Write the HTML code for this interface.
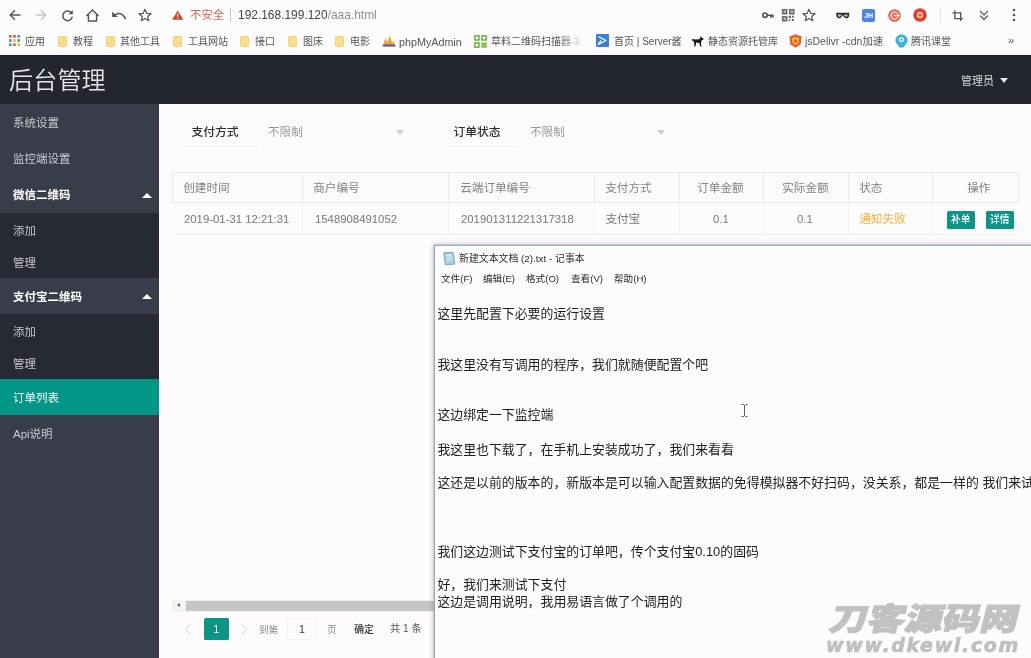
<!DOCTYPE html>
<html lang="zh-CN">
<head>
<meta charset="utf-8">
<title>后台管理</title>
<style>
*{box-sizing:border-box;margin:0;padding:0}
html,body{width:1031px;height:658px;overflow:hidden;background:#fdfbfb}
body{position:relative;font-family:"Liberation Sans","Noto Sans CJK SC",sans-serif;font-size:11.2px;color:#666;-webkit-font-smoothing:antialiased}
#all{position:absolute;left:0;top:0;width:1031px;height:658px;will-change:transform;transform:translateZ(0)}
.abs{position:absolute;white-space:nowrap}
/* ---------- browser chrome ---------- */
#chrome{position:absolute;left:0;top:0;width:1031px;height:55px;background:#fdfcfc}
#chrome .t{position:absolute;white-space:nowrap;font-size:10px;line-height:14px;color:#555;top:34.7px}
#chrome svg{position:absolute;overflow:visible}
.fold{position:absolute;top:35.5px;width:9px;height:11.5px;background:#f8de8a;border-radius:1.5px;border:1px solid #f4d470}
/* ---------- header ---------- */
#hdr{position:absolute;left:0;top:55px;width:1031px;height:49px;background:#23262e;box-shadow:inset 0 1px 0 #1b1c22}
#logo{position:absolute;left:9px;top:10.5px;font-size:24px;line-height:30px;color:#e6e6e8;font-weight:350;letter-spacing:0.2px;white-space:nowrap}
#adm{position:absolute;left:961px;top:18px;font-size:11px;line-height:16px;color:#d8d9db;white-space:nowrap}
#adm i{position:absolute;left:38.5px;top:4.5px;width:0;height:0;border-left:4.75px solid transparent;border-right:4.75px solid transparent;border-top:5.5px solid #e4e4e6}
/* ---------- sidebar ---------- */
#side{position:absolute;left:0;top:104px;width:159px;height:554px;background:#393d49}
#side .it{position:absolute;left:0;width:159px;height:36px;line-height:39px;padding-left:13px;font-size:11.5px;color:#c9cacf;white-space:nowrap}
#side .it.b{color:#fff;font-weight:700}
#side .sub{position:absolute;left:0;width:159px;background:#272a33}
#side .sub div{height:32px;line-height:36px;padding-left:13px;font-size:11.5px;color:#c3c4c9;white-space:nowrap}
#side .on{background:#029688;color:#fff}
#side .up{position:absolute;right:7.5px;top:16.5px;width:0;height:0;border-left:5px solid transparent;border-right:5px solid transparent;border-bottom:5.5px solid #fff}

/* ---------- main ---------- */
#main{position:absolute;left:159px;top:104px;width:872px;height:554px;background:#fdfbfb}
.lbl{position:absolute;top:11px;height:32px;line-height:34px;font-size:11.8px;font-weight:500;color:#2e2e2e;text-align:center;white-space:nowrap}
.lbl:after{content:"";position:absolute;left:12px;right:1px;bottom:0;height:1px;background:#f4f2f2}
.sel{position:absolute;top:11px;height:32px;line-height:34px;font-size:11.6px;color:#979797;white-space:nowrap}
.dn{position:absolute;top:25.5px;width:0;height:0;border-left:4.5px solid transparent;border-right:4.5px solid transparent;border-top:5px solid #cdcdcd}
#tb{position:absolute;left:13px;top:68px;width:847px;height:63px}
#tb .hd{position:absolute;left:0;top:0;width:847px;height:31px;background:#fcfafa;border:1px solid #eae8e8}
#tb .rw{position:absolute;left:0;top:31px;width:847px;height:32px;border-bottom:1px solid #efeded}
#tb .vl{position:absolute;top:0;width:1px;height:63px;background:linear-gradient(#e9e7e7 0,#e9e7e7 31px,#f3f1f1 31px,#f3f1f1 63px)}
#tb .c{position:absolute;white-space:nowrap;font-size:11.35px;line-height:16px;color:#777}
#tb .h{top:7.5px;color:#828282;font-size:11.6px;margin-left:-.8px}
#tb .d{top:38.7px}
.btn{position:absolute;top:39px;height:18px;width:27.5px;background:#0a9587;color:#fff;font-weight:500;font-size:9.7px;line-height:18px;text-align:center;border-radius:1.5px;white-space:nowrap}
#sb{position:absolute;left:13px;top:496px;width:262px;height:12px;background:#f3f2f2}
#sb b{position:absolute;left:14px;top:0.5px;width:248px;height:10.5px;background:#c6c5c5}
#sb i{position:absolute;left:5px;top:3px;width:0;height:0;border-top:2.5px solid transparent;border-bottom:2.5px solid transparent;border-right:3.5px solid #666}
#pg{position:absolute;left:13px;top:513px;height:26px;width:270px;font-size:9.6px;color:#8a8a8a}
#pg .abs{line-height:14px;top:6px}
#pg .cur{position:absolute;left:31.5px;top:1px;width:25.5px;height:21.5px;background:#0a9587;color:#fff;text-align:center;line-height:22px;font-size:11px;border-radius:1.5px}
#pg .box{position:absolute;top:1px;height:22px;border:1px solid #f3f1f1;border-radius:1.5px;text-align:center;line-height:21px;color:#3d3d3d;font-size:10.5px}

/* ---------- notepad ---------- */
#np{position:absolute;left:434px;top:245px;width:620px;height:430px;background:#fdfcfc;border:1px solid #8fabc6;box-shadow:0 0 0 .4px rgba(143,166,187,.7),0 0 5px 1px rgba(60,60,60,.26)}
#np .ti{position:absolute;left:24px;top:5.7px;font-size:9.9px;line-height:14px;color:#2b2b2b;white-space:nowrap}
#np .mn{position:absolute;top:25.6px;font-size:9.6px;line-height:14px;color:#2b2b2b;white-space:nowrap}
#np .ln{position:absolute;left:2.4px;font-size:12.9px;line-height:17px;color:#1d1d1d;white-space:nowrap}
#np svg{position:absolute;overflow:visible}
#wm1{-webkit-text-stroke:1.1px #c2c1c1;position:absolute;left:824.5px;top:597.5px;font-size:31px;line-height:44px;font-weight:900;color:#c2c1c1;white-space:nowrap;letter-spacing:0;transform-origin:0 100%;transform:skewX(-14deg) scaleX(1.215)}
#wm2{-webkit-text-stroke:0.7px #c0bfbf;position:absolute;left:826px;top:633px;font-size:19px;line-height:24px;font-weight:700;font-style:italic;color:#c0bfbf;white-space:nowrap;letter-spacing:1.65px;font-family:"DejaVu Sans","Liberation Sans",sans-serif}
</style>
</head>
<body>
<div id="all">

<!-- ================= BROWSER CHROME ================= -->
<div id="chrome">
  <!-- toolbar icons -->
  <svg style="left:9px;top:9.3px" width="12" height="12" viewBox="0 0 12 12"><path d="M11.5 6 H1.5 M6 1.2 L1.2 6 L6 10.8" fill="none" stroke="#555" stroke-width="1.4"/></svg>
  <svg style="left:35px;top:9.3px" width="12" height="12" viewBox="0 0 12 12"><path d="M0.5 6 H10.5 M6 1.2 L10.8 6 L6 10.8" fill="none" stroke="#c4c4c4" stroke-width="1.4"/></svg>
  <svg style="left:60.5px;top:8.5px" width="13" height="13" viewBox="0 0 13 13"><path d="M10.6 4.2 A4.8 4.8 0 1 0 11.3 7.6" fill="none" stroke="#555" stroke-width="1.5"/><path d="M11.8 1 V5.2 H7.6 Z" fill="#555"/></svg>
  <svg style="left:86px;top:8.5px" width="13" height="13" viewBox="0 0 13 13"><path d="M0.4 6.9 L6.5 1 L12.6 6.9 M2.4 5.4 V12 H10.6 V5.4" fill="none" stroke="#555" stroke-width="1.4"/></svg>
  <svg style="left:111.5px;top:11px" width="14" height="9" viewBox="0 0 14 9"><path d="M0.2 0.6 V6 H5.8 Z" fill="#555"/><path d="M2.6 4.2 C5.4 1.4 11 1.6 13.6 8.2" fill="none" stroke="#555" stroke-width="1.6"/></svg>
  <svg style="left:137.7px;top:7.6px" width="14" height="14" viewBox="0 0 14 14"><path d="M7 1.3 L8.7 5.3 L13 5.7 L9.7 8.5 L10.7 12.7 L7 10.5 L3.3 12.7 L4.3 8.5 L1 5.7 L5.3 5.3 Z" fill="none" stroke="#555" stroke-width="1.2" stroke-linejoin="round"/></svg>
  <svg style="left:171.5px;top:10px" width="11.5" height="10" viewBox="0 0 13 11"><path d="M6.5 0.3 L12.8 10.8 H0.2 Z" fill="#cf3f2a"/><path d="M6.5 3.8 V7.2 M6.5 8.2 V9.6" stroke="#fff" stroke-width="1.3"/></svg>
  <span class="t" style="left:190px;top:7px;font-size:11.4px;line-height:16px;color:#d9654d">不安全</span>
  <i style="position:absolute;left:230px;top:8px;width:1px;height:14px;background:#c4c4c4"></i>
  <span class="t" style="left:238px;top:7px;font-size:11.95px;line-height:16px;color:#444">192.168.199.120<span style="color:#8f8f8f">/aaa.html</span></span>

  <!-- right toolbar icons -->
  <svg style="left:762px;top:12px" width="12" height="7" viewBox="0 0 12 7"><circle cx="3" cy="3.2" r="2.2" fill="none" stroke="#555" stroke-width="1.7"/><path d="M5 3.2 H11.5 M9 3.2 V6 M11 3.2 V5.4" stroke="#555" stroke-width="1.6" fill="none"/></svg>
  <svg style="left:782px;top:9px" width="12.5" height="12.5" viewBox="0 0 13 13"><g fill="#bbb" stroke="#666" stroke-width="1.5"><rect x=".7" y=".7" width="4.2" height="4.2"/><rect x="8.1" y=".7" width="4.2" height="4.2"/><rect x=".7" y="8.1" width="4.2" height="4.2"/></g><path d="M7 7 h2.4 v2.4 H7z M10.4 10.4 h2 v2 h-2z M10.4 7 h2 v1.8 h-2z M7 10.6 h1.8 v1.8 H7z" fill="#666"/></svg>
  <svg style="left:802px;top:8px" width="14" height="14" viewBox="0 0 14 14"><path d="M7 1.3 L8.7 5.3 L13 5.7 L9.7 8.5 L10.7 12.7 L7 10.5 L3.3 12.7 L4.3 8.5 L1 5.7 L5.3 5.3 Z" fill="none" stroke="#555" stroke-width="1.2" stroke-linejoin="round"/></svg>
  <svg style="left:835.5px;top:12px" width="13.5" height="7" viewBox="0 0 16 8"><path d="M0.3 0.6 H15.7 V3 C15.7 6 14 7.4 12 7.4 C10 7.4 9 5.6 8 3.2 C7 5.6 6 7.4 4 7.4 C2 7.4 0.3 6 0.3 3 Z" fill="#2a2a2a"/><ellipse cx="4.2" cy="4" rx="2" ry="1.6" fill="#bdbdbd"/><ellipse cx="11.8" cy="4" rx="2" ry="1.6" fill="#bdbdbd"/></svg>
  <div style="position:absolute;left:862px;top:9px;width:13px;height:13px;background:#4a86e4;border-radius:2px;color:#fff;font-size:7px;line-height:13px;text-align:center;font-weight:700;letter-spacing:-.3px">JH</div>
  <svg style="left:888px;top:9px" width="13" height="13" viewBox="0 0 13 13"><circle cx="6.5" cy="6.5" r="6.3" fill="#e1604f"/><circle cx="6.5" cy="6.5" r="3.6" fill="none" stroke="#fbe3df" stroke-width="1.3"/><path d="M6.5 6.5 H12" stroke="#fbe3df" stroke-width="1.4"/><circle cx="6.5" cy="6.5" r="1.1" fill="#fbe3df"/></svg>
  <svg style="left:913px;top:8px" width="14" height="14" viewBox="0 0 14 14"><circle cx="7" cy="7" r="6.8" fill="#d9402f"/><circle cx="7" cy="7" r="3.2" fill="#f6c7b2"/><circle cx="7" cy="7" r="1.7" fill="#e8553c"/></svg>
  <i style="position:absolute;left:939.5px;top:8px;width:1px;height:15px;background:#e2e2e2"></i>
  <svg style="left:952px;top:9.5px" width="11.5" height="11.5" viewBox="0 0 13 13"><path d="M3.2 0.5 V9.8 H12.5 M0.5 3.2 H9.8 V12.5" fill="none" stroke="#555" stroke-width="1.5"/></svg>
  <svg style="left:979px;top:10px" width="10" height="11" viewBox="0 0 10 11"><path d="M1 1 L5 5 L9 1 M1 5.6 L5 9.6 L9 5.6" fill="none" stroke="#666" stroke-width="1.4"/></svg>
  <svg style="left:1012px;top:8px" width="4" height="14" viewBox="0 0 4 14"><circle cx="2" cy="2" r="1.3" fill="#555"/><circle cx="2" cy="7" r="1.3" fill="#555"/><circle cx="2" cy="12" r="1.3" fill="#555"/></svg>

  <!-- bookmarks bar -->
  <svg style="left:9px;top:35px" width="11" height="11" viewBox="0 0 11 11"><g><rect x="0" y="0" width="2.6" height="2.6" fill="#e0533f"/><rect x="4.2" y="0" width="2.6" height="2.6" fill="#e0533f"/><rect x="8.4" y="0" width="2.6" height="2.6" fill="#4a86e4"/><rect x="0" y="4.2" width="2.6" height="2.6" fill="#4a86e4"/><rect x="4.2" y="4.2" width="2.6" height="2.6" fill="#f0b52d"/><rect x="8.4" y="4.2" width="2.6" height="2.6" fill="#3fa45b"/><rect x="0" y="8.4" width="2.6" height="2.6" fill="#3fa45b"/><rect x="4.2" y="8.4" width="2.6" height="2.6" fill="#e0533f"/><rect x="8.4" y="8.4" width="2.6" height="2.6" fill="#f0b52d"/></g></svg>
<span class="t" style="left:25px;">应用</span><i class="fold" style="left:58px"></i><span class="t" style="left:73px;">教程</span><i class="fold" style="left:106px"></i><span class="t" style="left:120px;">其他工具</span><i class="fold" style="left:173px"></i><span class="t" style="left:188px;">工具网站</span><i class="fold" style="left:240px"></i><span class="t" style="left:255px;">接口</span><i class="fold" style="left:288px"></i><span class="t" style="left:303px;">图床</span><i class="fold" style="left:335px"></i><span class="t" style="left:350px;">电影</span>
  <svg style="left:382px;top:35px" width="14" height="12" viewBox="0 0 14 12"><path d="M0.5 11.5 L3.6 3 L5.4 8 L7.6 0.8 L10.4 8.4 L11.4 5.4 L13.6 11.5 Z" fill="#efa32b"/><path d="M0.5 11.5 H13.6 L13 9.4 H1.3 Z" fill="#5b5f9b"/></svg>
<span class="t" style="left:399px;font-size:10.75px">phpMyAdmin</span>
  <svg style="left:474px;top:35px" width="13" height="13" viewBox="0 0 13 13"><g fill="none" stroke="#6cb33f" stroke-width="1.5"><rect x=".8" y=".8" width="4.2" height="4.2"/><rect x="8" y=".8" width="4.2" height="4.2"/><rect x=".8" y="8" width="4.2" height="4.2"/></g><rect x="7.4" y="7.4" width="5.4" height="5.4" fill="#8cc152"/></svg>
  <span class="t" style="left:491px;width:92px;overflow:hidden;-webkit-mask-image:linear-gradient(90deg,#000 72%,transparent 100%);mask-image:linear-gradient(90deg,#000 72%,transparent 100%)">草料二维码扫描器-彩色二维码</span>
  <svg style="left:596px;top:34px" width="13" height="13" viewBox="0 0 13 13"><rect width="13" height="13" rx="1" fill="#3d7fd6"/><path d="M2.6 2.6 L9.6 6.5 L2.6 10.4 M5.2 6.5 L1.8 10.6" fill="none" stroke="#fff" stroke-width="1.2"/></svg>
<span class="t" style="left:614px;">首页 | Server酱</span>
  <svg style="left:691px;top:35px" width="13" height="12" viewBox="0 0 13 12"><path d="M0.6 5 C1.6 3.4 2.6 4 3.6 4.4 L8.6 4.2 L9.8 1 L10.8 2.8 L12.6 3.6 L12 5 L10.6 5.2 L10 8 L10.4 11.6 H9.2 L8.4 8 L5.2 7.6 L4.4 11.6 H3.2 L3.2 7 C2.4 6.4 1.6 5.4 0.6 5 Z" fill="#161616"/></svg>
<span class="t" style="left:708px;">静态资源托管库</span>
  <svg style="left:789px;top:34px" width="13" height="14" viewBox="0 0 13 14"><path d="M6.5 0.3 L12.6 2.4 L11.6 10.6 L6.5 13.8 L1.4 10.6 L0.4 2.4 Z" fill="#e3622c"/><path d="M6.5 3 L10 4.2 L9.4 9.2 L6.5 11 L3.6 9.2 L3 4.2 Z" fill="#f7b64d"/><circle cx="6.5" cy="7" r="1.7" fill="#e3622c"/></svg>
<span class="t" style="left:805px;font-size:10.45px">jsDelivr -cdn加速</span>
  <svg style="left:895px;top:34px" width="13" height="14" viewBox="0 0 13 14"><path d="M6.5 0.4 C10 0.4 12.6 3 12.6 6 C12.6 9.4 9.6 11 8.6 13.6 H4.4 C3.4 11 0.4 9.4 0.4 6 C0.4 3 3 0.4 6.5 0.4 Z" fill="#39b5d8"/><circle cx="6.5" cy="5.6" r="2.6" fill="#d8f2fa"/><circle cx="6.5" cy="5.6" r="1.1" fill="#2a9fc4"/></svg>
<span class="t" style="left:911px;">腾讯课堂</span>
  <span class="t" style="left:1008px;top:33px;font-size:11px;color:#555">»</span>
</div>

<!-- ================= HEADER ================= -->
<div id="hdr">
  <div id="logo">后台管理</div>
  <div id="adm">管理员<i></i></div>
</div>

<!-- ================= SIDEBAR ================= -->
<div id="side">
  <div class="it" style="top:0">系统设置</div>
  <div class="it" style="top:36px">监控端设置</div>
  <div class="it b" style="top:72px">微信二维码<span class="up"></span></div>
  <div class="sub" style="top:108.5px;height:65px"><div>添加</div><div>管理</div></div>
  <div class="it b" style="top:173.5px">支付宝二维码<span class="up"></span></div>
  <div class="sub" style="top:209.5px;height:65.5px"><div>添加</div><div>管理</div></div>
  <div class="it on" style="top:275px">订单列表</div>
  <div class="it" style="top:311px">Api说明</div>
</div>

<!-- ================= MAIN ================= -->
<div id="main">
  <div class="lbl" style="left:13px;width:86px">支付方式</div>
  <div class="sel" style="left:109px">不限制</div><i class="dn" style="left:237px"></i>
  <div class="lbl" style="left:275px;width:86px">订单状态</div>
  <div class="sel" style="left:371px">不限制</div><i class="dn" style="left:498px"></i>

  <div id="tb">
    <div class="hd"></div>
    <div class="rw"></div>
    <i class="vl" style="left:130px"></i><i class="vl" style="left:276px"></i><i class="vl" style="left:422px"></i>
    <i class="vl" style="left:507px"></i><i class="vl" style="left:591px"></i><i class="vl" style="left:676px"></i><i class="vl" style="left:760px"></i>
    <div class="c h" style="left:12px">创建时间</div>
    <div class="c h" style="left:142px">商户编号</div>
    <div class="c h" style="left:289px">云端订单编号</div>
    <div class="c h" style="left:434px">支付方式</div>
    <div class="c h" style="left:526px">订单金额</div>
    <div class="c h" style="left:611px">实际金额</div>
    <div class="c h" style="left:688px">状态</div>
    <div class="c h" style="left:796px">操作</div>

    <div class="c d" style="left:12px">2019-01-31 12:21:31</div>
    <div class="c d" style="left:143px">1548908491052</div>
    <div class="c d" style="left:289px">201901311221317318</div>
    <div class="c d" style="left:433.4px;font-size:11.6px">支付宝</div>
    <div class="c d" style="left:541px">0.1</div>
    <div class="c d" style="left:625px">0.1</div>
    <div class="c d" style="left:687.4px;color:#f2b234;font-size:11.6px">通知失败</div>
    <div class="btn" style="left:775px">补单</div>
    <div class="btn" style="left:814px">详情</div>
  </div>

  <div id="sb"><i></i><b></b></div>
  <div id="pg">
    <svg style="position:absolute;left:13px;top:7px" width="6" height="11" viewBox="0 0 6 11"><path d="M5.4 0.6 L0.8 5.5 L5.4 10.4" fill="none" stroke="#cfcfcf" stroke-width="1"/></svg>
    <div class="cur">1</div>
    <svg style="position:absolute;left:69px;top:7px" width="6" height="11" viewBox="0 0 6 11"><path d="M0.6 0.6 L5.2 5.5 L0.6 10.4" fill="none" stroke="#cfcfcf" stroke-width="1"/></svg>
    <span class="abs" style="left:87px">到第</span>
    <div class="box" style="left:115px;width:30px">1</div>
    <span class="abs" style="left:155px">页</span>
    <div class="box" style="left:175px;width:34px;color:#333;font-weight:500;border-color:#f8f6f6;font-size:9.8px">确定</div>
    <span class="abs" style="left:218px;color:#555;font-size:10.2px;top:5.3px">共 1 条</span>
  </div>
</div>

<!-- ================= NOTEPAD ================= -->
<div id="np">
  <svg style="left:8px;top:6px" width="12" height="13" viewBox="0 0 12 13"><path d="M1 1 L10 0.4 L11.6 11.8 L2.4 12.6 Z" fill="#a3d4ea" stroke="#93a8b8" stroke-width="1.3"/><path d="M3.5 3.4 L8.6 3 M3.8 5.6 L8.9 5.2 M4.1 7.8 L9.2 7.4" stroke="#e9f5fc" stroke-width=".9" fill="none"/></svg>
  <div class="ti">新建文本文档 (2).txt - 记事本</div>
  <div class="mn" style="left:6px">文件(F)</div>
  <div class="mn" style="left:48px">编辑(E)</div>
  <div class="mn" style="left:91px">格式(O)</div>
  <div class="mn" style="left:136px">查看(V)</div>
  <div class="mn" style="left:179px">帮助(H)</div>

  <div class="ln" style="top:58.5px">这里先配置下必要的运行设置</div>
  <div class="ln" style="top:109.5px">我这里没有写调用的程序，我们就随便配置个吧</div>
  <div class="ln" style="top:159.5px">这边绑定一下监控端</div>
  <div class="ln" style="top:194.5px">我这里也下载了，在手机上安装成功了，我们来看看</div>
  <div class="ln" style="top:227.5px">这还是以前的版本的，新版本是可以输入配置数据的免得模拟器不好扫码，没关系，都是一样的 我们来试试</div>
  <div class="ln" style="top:296.5px">我们这边测试下支付宝的订单吧，传个支付宝0.10的固码</div>
  <div class="ln" style="top:329.5px">好，我们来测试下支付</div>
  <div class="ln" style="top:346.5px">这边是调用说明，我用易语言做了个调用的</div>
  <svg style="left:306px;top:158px" width="7" height="13" viewBox="0 0 7 13"><path d="M0.5 0.5 H2.8 M4.2 0.5 H6.5 M3.5 1 V12 M0.5 12.5 H2.8 M4.2 12.5 H6.5" stroke="#5e5e5e" stroke-width="1" fill="none"/></svg>
</div>
<div id="wm1">刀客源码网</div>
<div id="wm2">www.dkewl.com</div>

</div>
</body>
</html>
